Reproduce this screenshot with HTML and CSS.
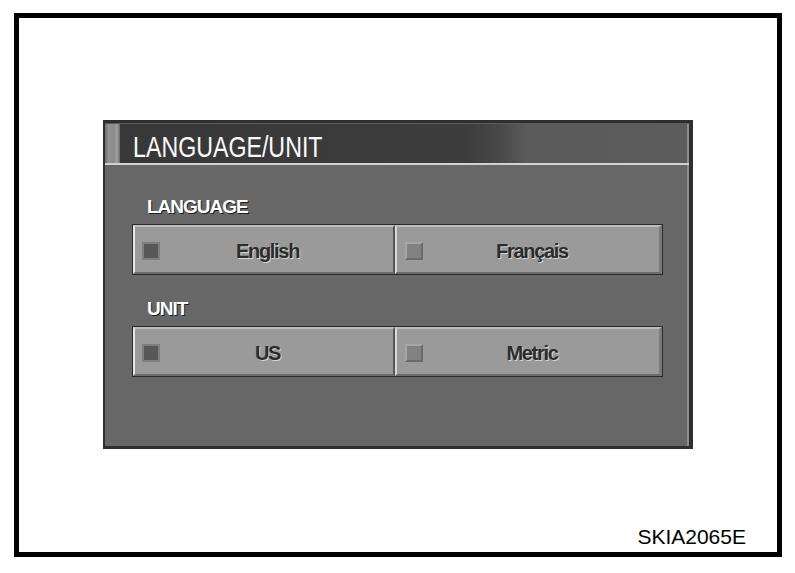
FILE: index.html
```html
<!DOCTYPE html>
<html>
<head>
<meta charset="utf-8">
<link rel="stylesheet" href="styles.css">
</head>
<body>
<div class="frame">
  <div class="panel">
    <div class="titlebar">
      <div class="accent"></div>
      <div class="title"><span class="title-text">LANGUAGE/UNIT</span></div>
    </div>
    <div class="body">
      <div class="label">LANGUAGE</div>
      <div class="row">
        <div class="btn btn-left"><span class="check check-on"></span><span class="btn-text">English</span></div>
        <div class="btn btn-right"><span class="check check-off"></span><span class="btn-text">Français</span></div>
      </div>
      <div class="label label-unit">UNIT</div>
      <div class="row">
        <div class="btn btn-left"><span class="check check-on"></span><span class="btn-text">US</span></div>
        <div class="btn btn-right"><span class="check check-off"></span><span class="btn-text">Metric</span></div>
      </div>
    </div>
  </div>
  <div class="code">SKIA2065E</div>
</div>
</body>
</html>
```
FILE: styles.css
```css
html, body {
  margin: 0;
  padding: 0;
  background: #fff;
}
body {
  width: 795px;
  height: 573px;
  overflow: hidden;
  font-family: "Liberation Sans", Arial, sans-serif;
}
.frame {
  box-sizing: border-box;
  margin: 13px 0 0 14px;
  width: 768px;
  height: 544px;
  border: 5px solid #000;
  padding: 102px 31px 3px 84px;
  display: flex;
  flex-direction: column;
}
.panel {
  box-sizing: border-box;
  width: 590px;
  height: 329px;
  background: #676767;
  border-top: 3px solid #2f2f2f;
  border-left: 2px solid #2f2f2f;
  border-right: 4px solid #2f2f2f;
  border-bottom: 3px solid #2f2f2f;
  box-shadow: inset -2px 0 0 #8e8e8e;
  display: flex;
  flex-direction: column;
}
.titlebar {
  height: 40px;
  display: flex;
  background: linear-gradient(to right, #383838 0%, #3c3c3c 62%, #4a4a4a 68%, #5a5a5a 72%, #5d5d5d 100%);
  border-top: 1px solid #5a5a5a;
  box-sizing: border-box;
  box-shadow: inset -2px 0 0 #8e8e8e;
}
.accent {
  width: 15px;
  background: linear-gradient(to right, #6e6e6e 0, #949494 25%, #8a8a8a 60%, #a0a0a0 80%, #6a6a6a 100%);
}
.title {
  padding: 7px 0 0 13px;
  line-height: 32px;
  color: #fafafa;
  font-size: 29px;
  white-space: nowrap;
}
.title-text {
  display: inline-block;
  transform: scaleX(0.8);
  transform-origin: left center;
}
.body {
  border-top: 2px solid #d2d2d2;
  padding: 31px 26px 0 27px;
  display: flex;
  flex-direction: column;
}
.label {
  margin-left: 15px;
  color: #fff;
  font-weight: bold;
  font-size: 19px;
  line-height: 22px;
  letter-spacing: -1px;
  text-shadow: 1px 1px 0 #1e1e1e;
}
.label-unit {
  margin-top: 23px;
}
.row {
  margin-top: 6px;
  height: 51px;
  box-sizing: border-box;
  border: 1px solid #2a2a2a;
  display: grid;
  grid-template-columns: 262px 1fr;
}
.btn {
  box-sizing: border-box;
  background: #9a9a9a;
  border-top: 2px solid #bdbdbd;
  border-bottom: 2px solid #6c6c6c;
  display: grid;
  grid-template-columns: 1fr auto 1fr;
  align-items: center;
  padding-left: 7px;
}
.btn-left {
  border-left: 2px solid #e6e6e6;
  border-right: 2px solid #555;
}
.btn-right {
  border-left: 2px solid #d8d8d8;
  border-right: 3px solid #7a7a7a;
  padding-left: 8px;
}
.check {
  justify-self: start;
  width: 18px;
  height: 18px;
  box-sizing: border-box;
  margin-top: 2px;
}
.check-on {
  background: #585858;
  border: 2px solid #7e7e7e;
}
.check-off {
  background: #828282;
  border: 2px solid #a6a6a6;
  border-right-color: #6a6a6a;
  border-bottom-color: #6a6a6a;
}
.btn-text {
  color: #2c2c2c;
  font-weight: bold;
  font-size: 20px;
  letter-spacing: -1.3px;
  line-height: 22px;
  margin-top: 3px;
  text-shadow: 1px 1px 0 #d4d4d4;
}
.code {
  margin-top: auto;
  align-self: flex-end;
  font-size: 21px;
  line-height: 24px;
  color: #000;
}
```
